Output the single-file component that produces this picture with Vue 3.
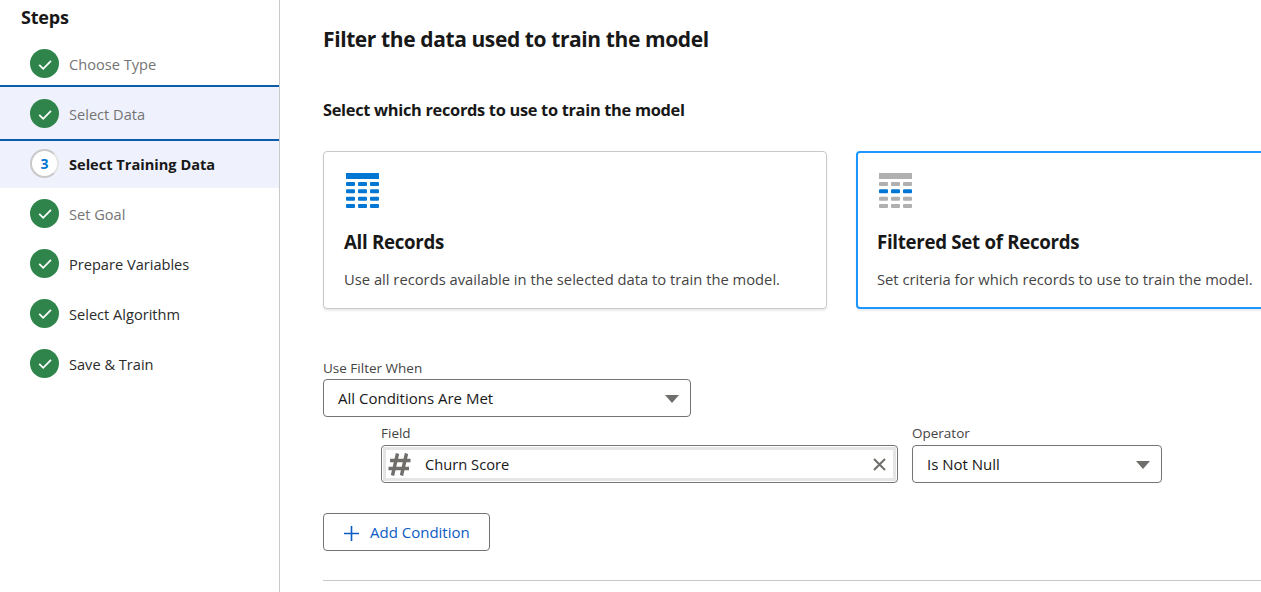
<script setup>
const steps = [
  { label: 'Choose Type', cls: 'first' },
  { label: 'Select Data', cls: 'second' },
  { label: 'Select Training Data', cls: 'current', num: 3 },
  { label: 'Set Goal', cls: 'plain' },
  { label: 'Prepare Variables', cls: 'dark' },
  { label: 'Select Algorithm', cls: 'dark' },
  { label: 'Save & Train', cls: 'dark' }
]
const rowY = [9, 16.33, 23.67, 31]
const colX = [1, 13, 25]
</script>

<template>
  <div class="page">
    <aside class="side">
      <h2 class="steps-title">Steps</h2>
      <ul class="steps">
        <li v-for="s in steps" :key="s.label" class="step" :class="s.cls">
          <span v-if="!s.num" class="dot">
            <svg width="16" height="16" viewBox="0 0 16 16"><path d="M2.2 8.8 6.2 12.8 14 4.8" fill="none" stroke="#fff" stroke-width="1.8"/></svg>
          </span>
          <span v-else class="dot num">{{ s.num }}</span>
          <span class="label">{{ s.label }}</span>
        </li>
      </ul>
    </aside>
    <main class="main">
      <h1 class="title">Filter the data used to train the model</h1>
      <h3 class="sub">Select which records to use to train the model</h3>
      <div class="cards">
        <section class="card">
          <svg class="tbl" width="36" height="36" viewBox="0 0 36 36">
            <rect x="1" y="0" width="33" height="6" fill="#0176d3"/>
            <template v-for="y in rowY" :key="y">
              <rect v-for="x in colX" :key="x" :x="x" :y="y" width="9" height="4" rx="1" fill="#0176d3"/>
            </template>
          </svg>
          <h4 class="card-title">All Records</h4>
          <p class="card-text">Use all records available in the selected data to train the model.</p>
        </section>
        <section class="card selected">
          <svg class="tbl" width="36" height="36" viewBox="0 0 36 36">
            <rect x="1" y="0" width="33" height="6" fill="#b0b0b0"/>
            <template v-for="y in rowY" :key="y">
              <rect v-for="x in colX" :key="x" :x="x" :y="y" width="9" height="4" rx="1" :fill="y === rowY[1] ? '#0176d3' : '#b0b0b0'"/>
            </template>
          </svg>
          <h4 class="card-title">Filtered Set of Records</h4>
          <p class="card-text">Set criteria for which records to use to train the model.</p>
        </section>
      </div>

      <div class="field when">
        <label class="flabel">Use Filter When</label>
        <div class="select"><span>All Conditions Are Met</span><i class="caret"></i></div>
      </div>

      <div class="cond">
        <div class="field f-field">
          <label class="flabel">Field</label>
          <div class="combo">
            <div class="combo-inner">
              <svg class="hash" width="23" height="23" viewBox="0 0 23 23"><path d="M9.5 0.5 4.5 22.5M18.5 0.5 13.5 22.5M2 7.5H22.5M0.5 15.5H21" stroke="#706e6b" stroke-width="3.4" fill="none"/></svg>
              <span class="combo-text">Churn Score</span>
              <svg class="x" width="13" height="13" viewBox="0 0 13 13"><path d="M1 1 12 12M12 1 1 12" stroke="#706e6b" stroke-width="2" fill="none"/></svg>
            </div>
          </div>
        </div>
        <div class="field f-op">
          <label class="flabel">Operator</label>
          <div class="select"><span>Is Not Null</span><i class="caret"></i></div>
        </div>
      </div>

      <button class="add" type="button">
        <svg class="plus" width="15" height="15" viewBox="0 0 15 15"><path d="M7.5 0V15M0 7.5H15" stroke="#0b5cc4" stroke-width="1.6" fill="none"/></svg>
        <span>Add Condition</span>
      </button>
      <hr class="rule-line" />
    </main>
  </div>
</template>

<style>
html, body { margin: 0; overflow: hidden; background: #fff; }
</style>

<style scoped>
.page {
  display: flex;
  width: 1261px;
  height: 592px;
  overflow: hidden;
  font-family: "Open Sans", "Noto Sans", sans-serif;
  color: #181818;
}
.side {
  width: 279px;
  flex: none;
  border-right: 1px solid #c9c9c9;
}
.steps-title {
  margin: 0;
  padding: 5px 0 0 21px;
  height: 40px;
  box-sizing: border-box;
  font-size: 18px;
  line-height: 24px;
  font-weight: 700;
  letter-spacing: -0.2px;
}
.steps { list-style: none; margin: 0; padding: 0; }
.step {
  height: 50px;
  display: flex;
  align-items: center;
  padding-left: 30px;
  box-sizing: border-box;
  font-size: 14.6px;
  color: #747474;
}
.step.first {
  height: 47px;
  padding-top: 2px;
  border-bottom: 2px solid #0b5cab;
}
.step.second {
  height: 54px;
  padding-top: 1px;
  background: #eff2fd;
  border-bottom: 2px solid #0b5cab;
}
.step.current {
  height: 47px;
  padding-bottom: 2px;
  background: #eff2fd;
  color: #181818;
  font-weight: 700;
}
.step.dark { color: #2b2b2b; }
.dot {
  width: 29px;
  height: 29px;
  border-radius: 50%;
  background: #2e844a;
  display: flex;
  align-items: center;
  justify-content: center;
  flex: none;
  margin-right: 10px;
}
.dot.num {
  background: #fff;
  box-sizing: border-box;
  border: 2px solid #c9c9c9;
  border-right-color: #e5e5e5;
  color: #0176d3;
  font-size: 14px;
  font-weight: 700;
}
.label { white-space: nowrap; position: relative; top: 0.5px; }
.main { flex: 1; padding-left: 43px; min-width: 0; }
.title {
  margin: 0;
  padding-top: 24px;
  font-size: 21px;
  line-height: 30px;
  font-weight: 700;
  letter-spacing: -0.4px;
}
.sub {
  margin: 0;
  padding-top: 45px;
  font-size: 16.4px;
  line-height: 22px;
  font-weight: 700;
  letter-spacing: -0.31px;
}
.cards { display: flex; gap: 29px; margin-top: 30px; width: 1200px; }
.card {
  width: 504px;
  height: 158px;
  box-sizing: border-box;
  flex: none;
  border: 1px solid #c9c9c9;
  border-radius: 4px;
  box-shadow: 0 2px 2px rgba(0, 0, 0, .08);
  padding: 21px 20px 0;
  background: #fff;
}
.card.selected { border: 2px solid #1b96ff; padding: 20px 19px 0; width: 520px; }
.tbl { display: block; margin-left: 1px; }
.card-title {
  margin: 20px 0 0;
  font-size: 18.7px;
  line-height: 26px;
  font-weight: 700;
  letter-spacing: -0.3px;
}
.card-text {
  margin: 14px 0 0;
  font-size: 14.75px;
  line-height: 20px;
  color: #444;
  white-space: nowrap;
}
.field { display: flex; flex-direction: column; }
.flabel { font-size: 13.5px; line-height: 16px; color: #444; margin-bottom: 3px; }
.when { width: 368px; margin-top: 51px; }
.select {
  height: 38px;
  box-sizing: border-box;
  border: 1px solid #747474;
  border-radius: 4px;
  display: flex;
  align-items: center;
  justify-content: space-between;
  padding: 0 11px 0 14px;
  font-size: 15px;
  color: #181818;
}
.caret {
  width: 0;
  height: 0;
  border-left: 7px solid transparent;
  border-right: 7px solid transparent;
  border-top: 8px solid #706e6b;
  margin-top: 2px;
}
.cond { display: flex; gap: 14px; padding-left: 58px; margin-top: 8px; }
.cond .flabel { margin-bottom: 4px; }
.f-field { width: 517px; }
.f-op { width: 250px; }
.combo {
  height: 38px;
  box-sizing: border-box;
  border: 1px solid #747474;
  border-radius: 4px;
  padding: 1px;
}
.combo-inner {
  height: 100%;
  box-sizing: border-box;
  border: 3px solid #e5e5e5;
  display: flex;
  align-items: center;
  padding: 0 7px 0 2px;
}
.hash { flex: none; margin-right: 14px; }
.combo-text { flex: 1; font-size: 14.7px; }
.x { flex: none; }
.add {
  display: flex;
  align-items: center;
  gap: 11px;
  width: 167px;
  height: 38px;
  box-sizing: border-box;
  margin-top: 30px;
  padding: 0 0 0 20px;
  border: 1px solid #747474;
  border-radius: 4px;
  background: #fff;
  color: #0b5cc4;
  font-family: inherit;
  font-size: 15px;
}
.plus { margin-top: 2px; }
.rule-line {
  margin: 29px 0 0;
  border: 0;
  border-top: 1px solid #c9c9c9;
}
</style>
